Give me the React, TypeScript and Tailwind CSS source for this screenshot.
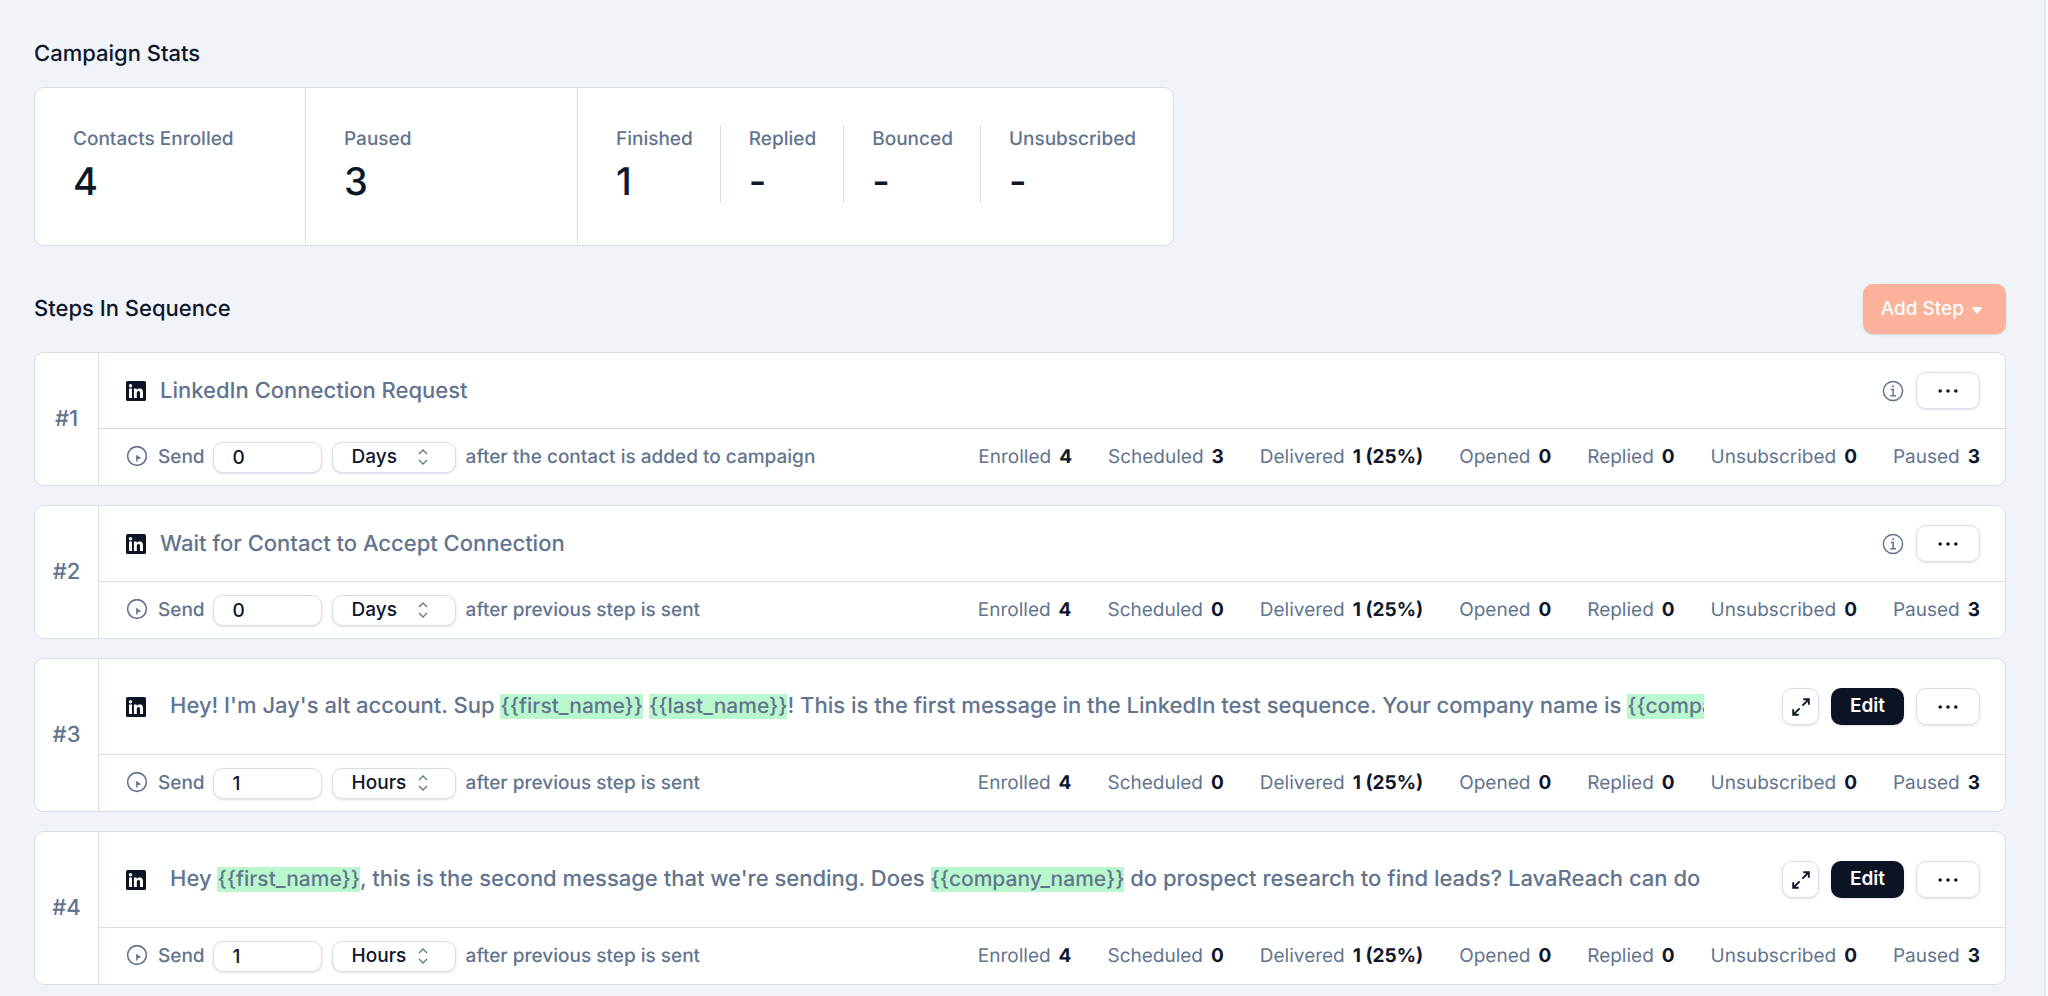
import React, { useState } from 'react';

type Unit = 'Days' | 'Hours';

interface Step {
  id: number;
  title?: string;
  message?: string;
  delay: string;
  unit: Unit;
  after: string;
  stats: [string, string][];
}

const buildStats = (scheduled: string): [string, string][] => [
  ['Enrolled', '4'],
  ['Scheduled', scheduled],
  ['Delivered', '1 (25%)'],
  ['Opened', '0'],
  ['Replied', '0'],
  ['Unsubscribed', '0'],
  ['Paused', '3'],
];

const STEPS: Step[] = [
  {
    id: 1,
    title: 'LinkedIn Connection Request',
    delay: '0',
    unit: 'Days',
    after: 'after the contact is added to campaign',
    stats: buildStats('3'),
  },
  {
    id: 2,
    title: 'Wait for Contact to Accept Connection',
    delay: '0',
    unit: 'Days',
    after: 'after previous step is sent',
    stats: buildStats('0'),
  },
  {
    id: 3,
    message:
      "Hey! I'm Jay's alt account. Sup {{first_name}} {{last_name}}! This is the first message in the LinkedIn test sequence. Your company name is {{company_name}}",
    delay: '1',
    unit: 'Hours',
    after: 'after previous step is sent',
    stats: buildStats('0'),
  },
  {
    id: 4,
    message:
      "Hey {{first_name}}, this is the second message that we're sending. Does {{company_name}} do prospect research to find leads? LavaReach can do",
    delay: '1',
    unit: 'Hours',
    after: 'after previous step is sent',
    stats: buildStats('0'),
  },
];

const LinkedInIcon = () => (
  <svg viewBox="0 0 20 20" className="size-5 shrink-0" aria-hidden="true">
    <rect width="20" height="20" rx="1.5" fill="#0c1325" />
    <circle cx="4.5" cy="4.7" r="1.7" fill="#fff" />
    <path fill="#fff" d="M3 7.6h3V17H3zM7.9 7.6h2.8v1.3c.5-.9 1.5-1.5 2.8-1.5 2.9 0 3.5 1.8 3.5 4.3V17h-3v-4.7c0-1.2 0-2.4-1.5-2.4s-1.7 1.1-1.7 2.3V17H7.9z" />
  </svg>
);

const ClockIcon = () => (
  <svg viewBox="0 0 22 22" className="size-[22px] shrink-0 text-slate-500" fill="none" stroke="currentColor" aria-hidden="true">
    <circle cx="11" cy="10" r="9.4" strokeWidth="1.6" />
    <path d="M10.9 9.3v6.2" strokeWidth="1.5" />
    <path d="M10.9 9.6l3.5 1.8v1.5h-3.5z" fill="currentColor" stroke="none" />
  </svg>
);

const InfoIcon = () => (
  <svg viewBox="0 0 22 22" className="size-[22px]" fill="none" stroke="currentColor" strokeWidth="1.5" aria-hidden="true">
    <circle cx="11" cy="11" r="9.6" />
    <path d="M8.8 9.4h2.4v6.2M8.3 15.8h5.6" />
    <circle cx="11" cy="6.3" r="1" fill="currentColor" stroke="none" />
  </svg>
);

const ExpandIcon = () => (
  <svg viewBox="0 0 18 18" className="size-[18px]" fill="none" stroke="currentColor" strokeWidth="1.9" aria-hidden="true">
    <path d="M11.3 1.2h5.5v5.5M16.4 1.6l-6 6M6.7 16.8H1.2v-5.5M1.6 16.4l6-6" />
  </svg>
);

const DotsIcon = () => (
  <svg viewBox="0 0 20 4" className="h-1 w-5" fill="currentColor" aria-hidden="true">
    <circle cx="2.2" cy="2" r="1.8" />
    <circle cx="10" cy="2" r="1.8" />
    <circle cx="17.8" cy="2" r="1.8" />
  </svg>
);

const SortIcon = () => (
  <svg viewBox="0 0 10 16" className="h-4 w-2.5 text-slate-500" fill="none" stroke="currentColor" strokeWidth="1.3" aria-hidden="true">
    <path d="M1 5l4-4 4 4M1 11l4 4 4-4" />
  </svg>
);

// Highlights {{variable}} placeholders inside a message
const MessagePreview: React.FC<{ text: string }> = ({ text }) => (
  <p className="min-w-0 max-w-[1534px] flex-1 overflow-hidden whitespace-nowrap text-[22px] leading-7 font-medium text-slate-500">
    {text.split(/(\{\{\w+\}\})/).map((part, i) =>
      part.startsWith('{{') ? (
        <mark key={i} className="bg-green-200 text-[21px] text-slate-500">{part}</mark>
      ) : (
        <span key={i}>{part}</span>
      )
    )}
  </p>
);

const BigStat: React.FC<{ label: string; value: string }> = ({ label, value }) => (
  <div>
    <div className="text-[19px] leading-7 font-medium text-slate-500">{label}</div>
    <div className="mt-2 text-[38px] leading-[42px] font-medium text-slate-900">{value}</div>
  </div>
);

const StepCard: React.FC<{ step: Step }> = ({ step }) => {
  const [delay, setDelay] = useState(step.delay);
  const [unit, setUnit] = useState<Unit>(step.unit);

  return (
    <li className="flex rounded-[10px] border border-[#d7dfe9] bg-white">
      <div className="flex w-16 shrink-0 items-center justify-center border-r border-[#d7dfe9] text-[22px] font-medium text-slate-500">
        #{step.id}
      </div>
      <div className="min-w-0 flex-1">
        <div className={`flex items-center border-b border-[#d7dfe9] pr-[25px] pl-[27px] ${step.message ? 'h-24' : 'h-[76px]'}`}>
          <LinkedInIcon />
          {step.message ? (
            <div className="flex min-w-0 flex-1 pl-6">
              <MessagePreview text={step.message} />
            </div>
          ) : (
            <h3 className="flex-1 pl-3.5 text-[22px] leading-7 font-medium text-slate-500">{step.title}</h3>
          )}
          <div className="flex items-center gap-3">
            {step.message ? (
              <>
                <button type="button" aria-label="Expand message" className="flex h-[37px] w-[37px] items-center justify-center rounded-[10px] border border-[#d7dfe9] text-slate-900 shadow-sm">
                  <ExpandIcon />
                </button>
                <button type="button" className="h-[37px] w-[73px] rounded-[10px] bg-[#0c1325] text-[19px] font-semibold text-white shadow-sm">
                  Edit
                </button>
              </>
            ) : (
              <button type="button" aria-label="Step info" className="text-slate-500">
                <InfoIcon />
              </button>
            )}
            <button type="button" aria-label="More actions" className="flex h-[37px] w-16 items-center justify-center rounded-[10px] border border-[#d7dfe9] text-slate-900 shadow-sm">
              <DotsIcon />
            </button>
          </div>
        </div>

        <div className="flex h-14 items-center justify-between pr-[25px] pl-[27px] text-[19px] leading-6">
          <div className="flex items-center font-medium text-slate-500">
            <ClockIcon />
            <label htmlFor={`delay-${step.id}`} className="pr-2 pl-2.5">Send</label>
            <input
              id={`delay-${step.id}`}
              value={delay}
              onChange={e => setDelay(e.target.value)}
              className="h-[31px] w-[109px] rounded-[10px] border border-[#d7dfe9] bg-white pl-[19px] text-slate-900 shadow-sm"
            />
            <div className="relative ml-2.5 flex items-center">
              <select
                aria-label="Delay unit"
                value={unit}
                onChange={e => setUnit(e.target.value as Unit)}
                className="h-[31px] w-[124px] appearance-none rounded-[10px] border border-[#d7dfe9] bg-white pl-[19px] text-slate-900 shadow-sm"
              >
                <option>Days</option>
                <option>Hours</option>
              </select>
              <span className="pointer-events-none absolute right-7">
                <SortIcon />
              </span>
            </div>
            <span className="pl-2.5">{step.after}</span>
          </div>
          <dl className="flex gap-9">
            {step.stats.map(([label, value]) => (
              <div key={label} className="flex gap-2 whitespace-nowrap">
                <dt className="text-slate-500">{label}</dt>
                <dd className="font-bold text-slate-900">{value}</dd>
              </div>
            ))}
          </dl>
        </div>
      </div>
    </li>
  );
};

export default function App() {
  return (
    <div className="flex min-h-screen bg-slate-50 pr-0.5 font-['Inter',sans-serif] [text-rendering:geometricPrecision]">
      <main className="min-w-0 flex-1 border-r-2 border-slate-200 bg-[#f0f3f8] pt-[39px] pr-[38px] pb-3 pl-[34px]">
        <h2 className="text-[22px] leading-[30px] font-medium text-slate-900">Campaign Stats</h2>
        <section className="mt-[18px] flex w-fit rounded-[10px] border border-[#d7dfe9] bg-white">
          <div className="w-[271px] border-r border-[#d7dfe9] px-[38px] pt-[37px] pb-[42px]">
            <BigStat label="Contacts Enrolled" value="4" />
          </div>
          <div className="w-[272px] border-r border-[#d7dfe9] px-[38px] pt-[37px] pb-[42px]">
            <BigStat label="Paused" value="3" />
          </div>
          <div className="flex divide-x divide-[#d7dfe9] px-2.5 pt-[37px] pb-[42px] *:pr-[27px] *:pl-7">
            <BigStat label="Finished" value="1" />
            <BigStat label="Replied" value="-" />
            <BigStat label="Bounced" value="-" />
            <BigStat label="Unsubscribed" value="-" />
          </div>
        </section>

        <div className="mt-[38px] flex items-center justify-between">
          <h2 className="text-[22px] leading-[30px] font-medium text-slate-900">Steps In Sequence</h2>
          <button type="button" className="flex h-[50px] items-center gap-2 rounded-[10px] bg-[#fcb19b] pr-6 pl-[18px] text-[19px] font-medium text-white shadow-sm">
            Add Step
            <svg viewBox="0 0 10 7" className="mt-0.5 h-[7px] w-2.5" fill="currentColor" aria-hidden="true">
              <path d="M.6 0h8.8a.6.6 0 0 1 .4 1L5.5 6.5a.7.7 0 0 1-1 0L.2 1a.6.6 0 0 1 .4-1z" />
            </svg>
          </button>
        </div>
        <ol className="mt-[18px] flex flex-col gap-[19px]">
          {STEPS.map(step => (
            <StepCard key={step.id} step={step} />
          ))}
        </ol>
      </main>
    </div>
  );
}
